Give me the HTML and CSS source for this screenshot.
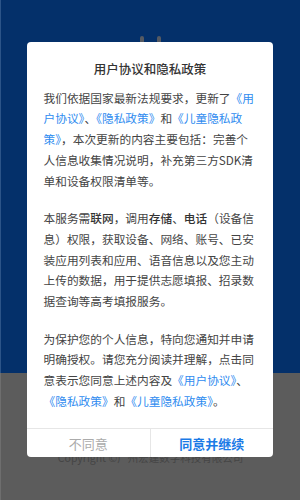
FILE: index.html
```html
<!DOCTYPE html>
<html lang="zh-CN">
<head>
<meta charset="utf-8" />
<title>用户协议和隐私政策</title>
<link rel="stylesheet" href="styles.css">
</head>
<body>
<div class="page">
	<div class="hero">
		<span class="blob"></span>
		<span class="blob"></span>
	</div>
	<div class="foot">Copyright ©广州宏建数字科技有限公司</div>
</div>
<div class="dialog">
	<h1 class="title">用户协议和隐私政策</h1>
	<div class="content">
		<p>我们依据国家最新法规要求，更新了<a href="#">《用户协议》</a>、<a href="#">《隐私政策》</a>和<a href="#">《儿童隐私政策》</a>，本次更新的内容主要包括：完善个人信息收集情况说明，补充第三方SDK清单和设备权限清单等。</p>
		<p>本服务需<b>联网</b>，调用<b>存储</b>、<b>电话</b>（设备信息）权限，获取设备、网络、账号、已安装应用列表和应用、语音信息以及您主动上传的数据，用于提供志愿填报、招录数据查询等高考填报服务。</p>
		<p>为保护您的个人信息，特向您通知并申请明确授权。请您充分阅读并理解，点击同意表示您同意上述内容及<a href="#">《用户协议》</a>、<a href="#">《隐私政策》</a>和<a href="#">《儿童隐私政策》</a>。</p>
	</div>
	<div class="actions">
		<button class="btn btn-cancel">不同意</button>
		<button class="btn btn-ok">同意并继续</button>
	</div>
</div>
</body>
</html>
```

FILE: styles.css
```css
* {
	padding:0;
	margin:0;
	box-sizing:border-box;
}
body {
	width:300px;
	height:500px;
	overflow:hidden;
	font-family:"Noto Sans CJK SC","Noto Sans",sans-serif;
	position:relative;
}
.page {
	height:500px;
	display:flex;
	flex-direction:column;
}
.hero {
	height:373px;
	background:#04306a;
	border-left:1px solid #2c5488;
	display:flex;
	justify-content:center;
	gap:12.5px;
	padding-top:36px;
}
.blob {
	width:4.5px;
	height:10px;
	border-radius:2px 2px 0 0;
	background:#565a62;
}
.foot {
	flex:1;
	background:#5c5c5c;
	border-left:1px solid #6e6e6e;
	color:#454545;
	font-size:10.5px;
	line-height:16px;
	text-align:center;
	padding-top:77px;
}
.dialog {
	position:absolute;
	left:27px;
	top:42px;
	width:246px;
	height:415px;
	background:white;
	border-radius:4px;
	display:flex;
	flex-direction:column;
}
.title {
	font-size:12.5px;
	font-weight:500;
	color:#333;
	text-align:center;
	line-height:18px;
	margin-top:18px;
}
.content {
	flex:1;
	padding:9.6px 16px 0 16.5px;
	font-size:11.7px;
	line-height:20.8px;
	color:#444;
}
.content p {
	margin-bottom:16.5px;
}
.content b {
	font-weight:500;
	color:#333;
}
.content a {
	color:#2f8cf0;
	text-decoration:none;
}
.actions {
	height:35px;
	border-top:1px solid #e6e6e6;
	display:flex;
}
.btn {
	flex:1;
	border:none;
	background:none;
	font-family:inherit;
	font-size:13px;
}
.btn-cancel {
	color:#ababab;
	border-right:1px solid #e6e6e6;
}
.btn-ok {
	color:#1a7ae6;
	font-weight:bold;
}
```
